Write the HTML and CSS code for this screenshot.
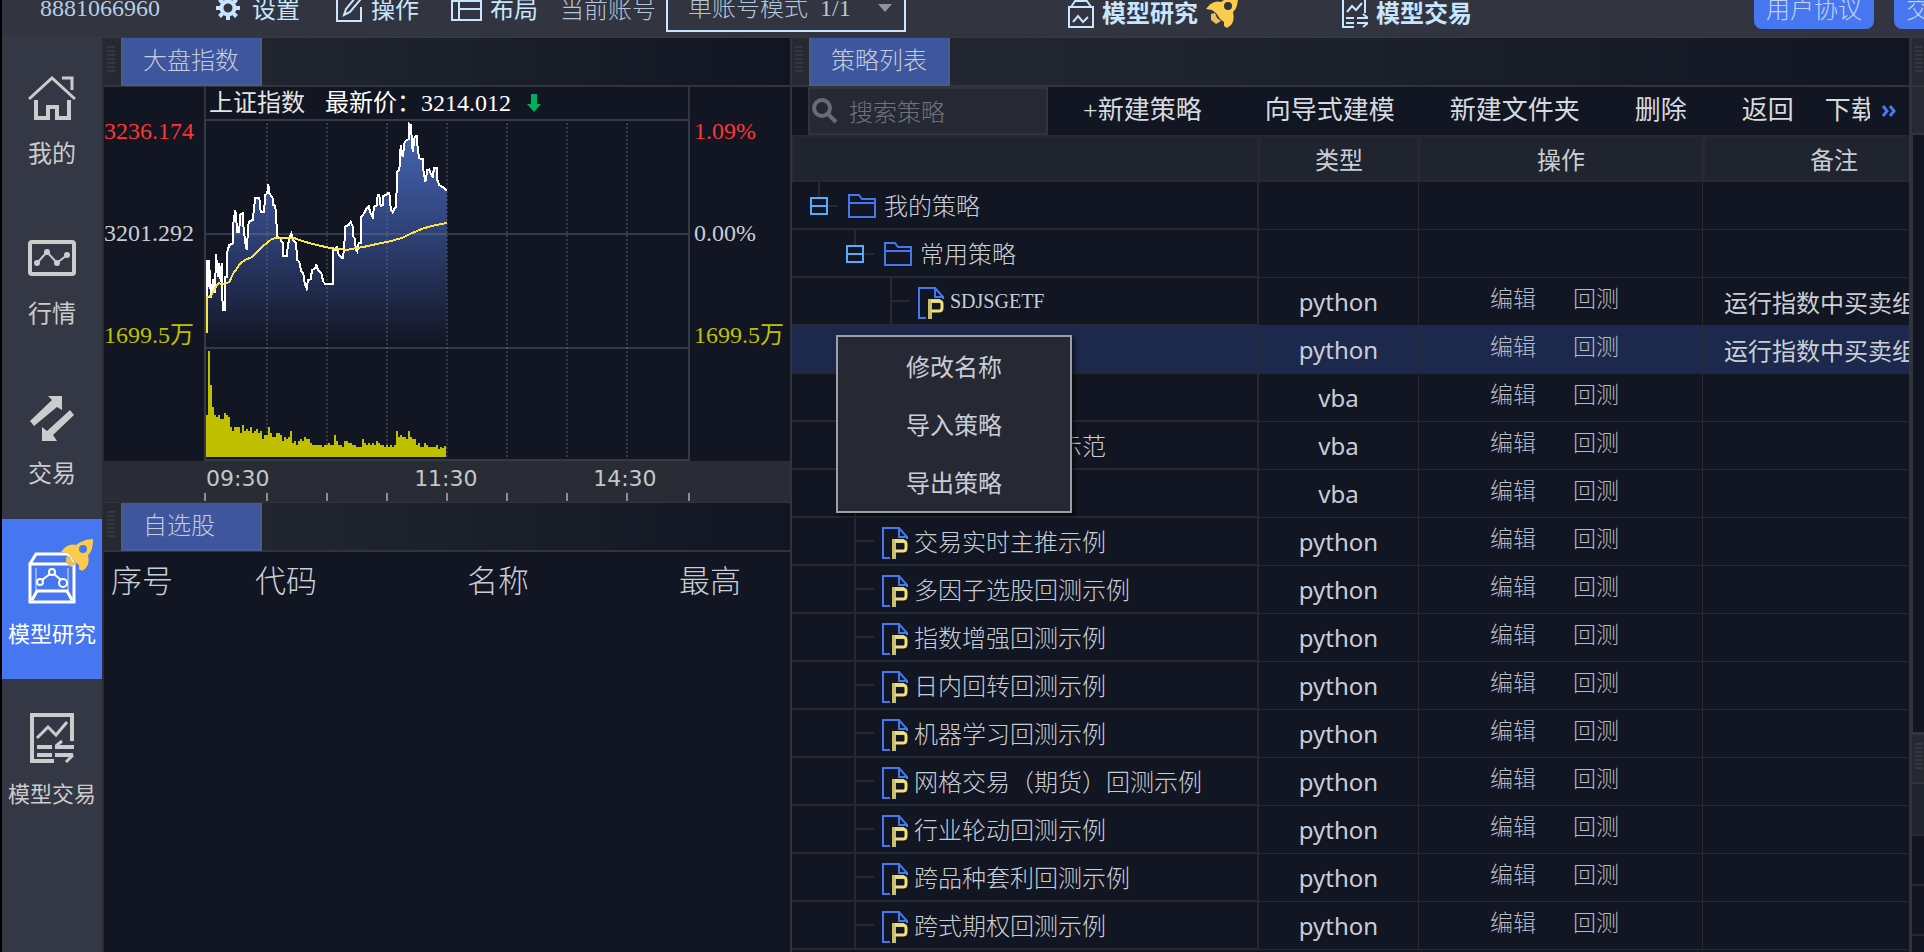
FILE: index.html
```html
<!DOCTYPE html>
<html lang="zh-CN">
<head>
<meta charset="utf-8">
<title>模型研究</title>
<link rel="stylesheet" href="styles.css">
</head>
<body>
<svg class="defs" aria-hidden="true">
  <symbol id="rocket" viewBox="0 0 32 32">
    <path fill="#fbcb4b" fill-rule="evenodd" d="M32 0C25 0 19 3 15 6 10 4 4 7 0 13l6 1 4 3 4 6 4 3 0 4 3 2 4-3c3-4 3-8 2-13C31 13 32 7 32 0ZM22 6a4 4 0 1 1 0 8 4 4 0 0 1 0-8Z"/>
    <path fill="#e9c060" d="M5 18l4-1 2 5 4 3-5 3-5-4Z"/>
  </symbol>
  <symbol id="folder" viewBox="0 0 28 24">
    <path fill="none" stroke="#4677f0" stroke-width="2" d="M1 23V1h10l3 4h13v18ZM1 9h26"/>
  </symbol>
  <symbol id="file" viewBox="0 0 26 32">
    <path fill="none" stroke="#4677f0" stroke-width="2" d="M8 31H1V1h16l8 9M17 1v9h8v2"/>
    <path fill="none" stroke="#cdc06c" stroke-width="4" d="M12 32V14h10"/>
    <path fill="none" stroke="#f0e277" stroke-width="3" d="M13 14h8q3 0 3 3v4q0 3-3 3h-8"/>
  </symbol>
  <symbol id="expander" viewBox="0 0 18 18">
    <path fill="none" stroke="#55adfb" stroke-width="2" d="M1 1h16v16H1ZM1 9h16"/>
  </symbol>
</svg>

<header class="topbar">
  <div class="topbar-inner">
    <span class="account-id">8881066960</span>
    <button class="top-btn settings" type="button">
      <svg width="24" height="24" viewBox="0 0 24 24" fill="none" stroke="currentColor"><circle cx="12" cy="12" r="6.500" stroke-width="4"/><path stroke-width="4" d="M12 0v4M12 20v4M0 12h4M20 12h4M3.500 3.500l3 3M17.500 17.500l3 3M20.500 3.500l-3 3M6.500 17.500l-3 3"/></svg>
      设置</button>
    <button class="top-btn edit" type="button">
      <svg width="26" height="28" viewBox="0 0 26 28" fill="none" stroke="currentColor" stroke-width="2"><path d="M15 4H1v23h24V13"/><path d="M8 21l2-6L20 3l4 3-10 12Z"/></svg>
      操作</button>
    <button class="top-btn layout" type="button">
      <svg width="31" height="26" viewBox="0 0 31 26" fill="none" stroke="currentColor" stroke-width="2"><path d="M1 1h29v24H1ZM8 1v24M8 14h22M1 6h29"/></svg>
      布局</button>
    <label class="mode-label" for="mode">当前账号</label>
    <div class="mode-box">
      <select id="mode"><option>单账号模式&nbsp; 1/1</option></select>
      <svg class="mode-arrow" width="14" height="8" viewBox="0 0 14 8"><path fill="#8f949c" d="M0 0h14L7 8Z"/></svg>
    </div>
    <a class="top-link research" href="#research">
      <svg width="26" height="32" viewBox="0 0 26 32" fill="none" stroke="currentColor" stroke-width="2"><path d="M1 11h24v20H1ZM3 11l4-6h12l4 6"/><path d="M5 26l5-6 5 6 5-5"/></svg>
      模型研究
      <svg class="top-rocket" width="32" height="32"><use href="#rocket"/></svg></a>
    <a class="top-link trading" href="#trading">
      <svg width="26" height="32" viewBox="0 0 26 32" fill="none" stroke="currentColor" stroke-width="2"><path d="M12 31H1V1h22v16"/><path d="M5 16l5-6 4 4 6-7M4 22h8M4 27h8M15 22h11l-5-4M15 27h11l-5 4"/></svg>
      模型交易</a>
    <button class="pill agreement" type="button">用户协议</button>
    <button class="pill" type="button">交易协议</button>
  </div>
</header>

<main class="workspace">
  <nav class="sidebar">
    <a href="#mine" class="nav-item">
      <span class="nav-icon"><svg width="48" height="44" viewBox="0 0 48 44" fill="none" stroke="currentColor" stroke-width="3"><path d="M1 23L24 2l23 21M34 2h10v12"/><path stroke-width="4" d="M8 24v18h12V31h9v11h12V24"/></svg></span>
      <span>我的</span></a>
    <a href="#quotes" class="nav-item">
      <span class="nav-icon"><svg width="48" height="36" viewBox="0 0 48 36" fill="none" stroke="currentColor"><rect x="2" y="2" width="44" height="32" rx="2" stroke-width="4"/><path stroke-width="2" d="M9 23L19 12l10 11 10-8"/><g fill="currentColor" stroke="none"><circle cx="9" cy="23" r="3"/><circle cx="19" cy="12" r="3"/><circle cx="29" cy="23" r="3"/><circle cx="39" cy="15" r="3"/></g></svg></span>
      <span>行情</span></a>
    <a href="#trade" class="nav-item">
      <span class="nav-icon"><svg width="44" height="48" viewBox="0 0 44 48" fill="currentColor"><path d="M18 2h14v14l-5-3L4 32 0 27 22 6Z"/><path d="M40 16l4 5-21 20 4 6H12V33l5 4Z"/></svg></span>
      <span>交易</span></a>
    <a href="#research" class="nav-item active">
      <span class="nav-icon"><svg width="48" height="52" viewBox="0 0 48 52" fill="none" stroke="currentColor" stroke-width="2"><path stroke-width="3" d="M2 12h44v38H2ZM2 12l6-10h32l6 10M4 48l5-9h30l5 9"/><path stroke-opacity=".4" d="M8 16v23M40 16v23"/><circle cx="12" cy="30" r="3"/><circle cx="24" cy="20" r="3"/><circle cx="35" cy="31" r="4"/><path d="M14 28l8-6M26 22l7 6"/></svg></span>
      <svg class="nav-rocket" width="32" height="32"><use href="#rocket"/></svg>
      <span class="nav-long">模型研究</span></a>
    <a href="#trading" class="nav-item">
      <span class="nav-icon"><svg width="44" height="50" viewBox="0 0 44 50" fill="none" stroke="currentColor" stroke-width="4"><path d="M24 48H2V2h40v26"/><path stroke-width="3" d="M7 25l11-11 8 8L37 9"/><path d="M7 34h15M25 34h19M7 42h15M25 42h18"/><path stroke-width="3" d="M26 33l6-5M43 42l-7 7"/></svg></span>
      <span class="nav-long">模型交易</span></a>
  </nav>

  <div class="left">
    <section class="panel">
      <div class="panel-head"><i class="grip"></i><h2 class="tab">大盘指数</h2></div>
      <div class="chart">
        <div class="axis axis-left"><span class="up">3236.174</span><span>3201.292</span><span class="vol">1699.5万</span></div>
        <div class="plot">
          <div class="quote"><span class="quote-name">上证指数</span><span>最新价：3214.012</span>
            <svg width="14" height="18" viewBox="0 0 14 18"><path fill="#00ae5f" d="M4 0h6v10h4L7 18 0 10h4Z"/></svg></div>
          <svg class="plot-svg" viewBox="0 0 486 342" preserveAspectRatio="none">
            <defs><linearGradient id="area" x1="0" y1="0" x2="0" y2="1"><stop offset="0" stop-color="#4868b8"/><stop offset=".5" stop-color="#2e4075"/><stop offset="1" stop-color="#121522"/></linearGradient></defs>
            <path id="priceArea" fill="url(#area)"/>
            <g stroke="#787d8c" stroke-opacity=".36" stroke-width="2" shape-rendering="crispEdges">
              <path fill="none" d="M1 1h484v340H1ZM1 115h484M1 229h484"/>
              <path fill="none" stroke-dasharray="2 2" d="M63 4v334M123 4v334M183 4v334M243 4v334M303 4v334M363 4v334M423 4v334"/>
            </g>
            <path id="volume" fill="#c0c000" shape-rendering="crispEdges"/>
            <polyline id="price" fill="none" stroke="#fff" stroke-width="2" shape-rendering="crispEdges"/>
            <polyline id="average" fill="none" stroke="#f9e547" stroke-width="2" shape-rendering="crispEdges"/>
          </svg>
        </div>
        <div class="axis"><span class="up">1.09%</span><span>0.00%</span><span class="vol">1699.5万</span></div>
      </div>
      <div class="times">
        <div class="time-labels"><span>09:30</span><span>11:30</span><span>14:30</span></div>
        <svg class="ticks" viewBox="0 0 486 8" preserveAspectRatio="none"><path stroke="#8b8d92" stroke-width="2" d="M1 0v8M63 0v8M123 0v8M183 0v8M243 0v8M303 0v8M363 0v8M423 0v8M485 0v8"/></svg>
      </div>
    </section>
    <section class="panel watch">
      <div class="panel-head"><i class="grip"></i><h2 class="tab">自选股</h2></div>
      <div class="clip"><table class="watch-table"><thead><tr><th>序号</th><th>代码</th><th>名称</th><th>最高</th></tr></thead></table></div>
    </section>
  </div>

  <section class="panel right">
    <div class="panel-head"><i class="grip"></i><h2 class="tab">策略列表</h2></div>
    <div class="toolbar">
      <label class="search"><svg width="26" height="26" viewBox="0 0 26 26" fill="none" stroke="#6a6c71" stroke-width="4"><circle cx="10" cy="10" r="8"/><path d="M16 16l8 8"/></svg><input type="search" placeholder="搜索策略" aria-label="搜索策略"></label>
      <div class="tools">
        <button type="button" class="tool-new">+新建策略</button><button type="button">向导式建模</button><button type="button">新建文件夹</button><button type="button">删除</button><button type="button">返回</button><button type="button" class="tool-last">下载</button>
      </div>
      <button type="button" class="more" aria-label="更多"><svg width="14" height="12" viewBox="0 0 14 12" fill="none" stroke="#4677f0" stroke-width="3"><path d="M1 1l4 5-4 5M8 1l4 5-4 5"/></svg></button>
    </div>
    <div class="clip grow">
      <table class="strategies">
        <colgroup><col><col class="c-type"><col class="c-ops"><col class="c-note"></colgroup>
        <thead><tr><th aria-label="名称"></th><th>类型</th><th>操作</th><th>备注</th></tr></thead>
        <tbody id="rows"></tbody>
      </table>
    </div>
    <div class="menu" role="menu">
      <button type="button" role="menuitem">修改名称</button>
      <button type="button" role="menuitem">导入策略</button>
      <button type="button" role="menuitem">导出策略</button>
    </div>
  </section>

  <aside class="edge">
    <div class="edge-top"><i class="grip"></i></div>
    <div class="edge-tool"></div>
    <div class="edge-body"></div>
    <div class="edge-top edge-second"><i class="grip"></i></div>
    <div class="edge-th"></div>
    <div class="edge-td"></div><div class="edge-td"></div><div class="edge-td"></div>
  </aside>
</main>
<script src="app.js"></script>
</body>
</html>
```

FILE: styles.css
```css
:root {
  --bg: #121522;
  --line: #262932;
  --edge: #32343b;
  --head: #262932;
  --text: #c9ced6;
  --blue: #4677f0;
  --cjk: "Noto Sans CJK SC", sans-serif;
  --song: "Liberation Serif", "Noto Sans CJK SC", serif;
}
* { box-sizing: border-box; }
body {
  margin: 0;
  height: 100vh;
  display: flex;
  flex-direction: column;
  overflow: hidden;
  background: var(--bg);
  color: var(--text);
  font: 24px/32px var(--cjk);
  border-left: 2px solid #000;
}
button, input, select {
  font: inherit;
  color: inherit;
  background: none;
  border: 0;
  padding: 0;
  margin: 0;
  white-space: nowrap;
}
a { color: inherit; text-decoration: none; }
svg { display: block; flex: none; }
.defs { position: absolute; width: 0; height: 0; }

.topbar {
  flex: none;
  height: 38px;
  display: flex;
  align-items: flex-end;
  overflow: hidden;
  background: #32343f;
  border-bottom: 1px solid #3a3b40;
}
.topbar-inner {
  flex: none;
  height: 58px;
  display: flex;
  align-items: center;
  color: #c8e6ff;
  white-space: nowrap;
}
.account-id { font-family: var(--song); color: #b8cfe4; margin-left: 38px; }
.top-btn { display: flex; align-items: center; }
.settings { gap: 12px; margin-left: 56px; }
.edit { gap: 9px; margin-left: 36px; }
.layout { gap: 8px; margin-left: 32px; }
.mode-label { margin-left: 22px; color: #b5c6d6; font-weight: 300; }
.mode-box {
  display: flex;
  align-items: center;
  width: 240px;
  height: 48px;
  margin-left: 10px;
  border: 2px solid #c8e6ff;
  padding: 0 12px 0 20px;
}
.mode-box select {
  flex: 1;
  min-width: 0;
  appearance: none;
  font-family: var(--song);
  color: #b5c6d6;
  font-weight: 300;
}
.top-link { display: flex; align-items: center; gap: 8px; padding-top: 8px; font-weight: 700; }
.research { margin-left: 162px; }
.trading { margin-left: 104px; }
.pill {
  width: 120px;
  height: 42px;
  border-radius: 8px;
  background: var(--blue);
  color: #c5d2ee;
  font-weight: 300;
}
.agreement { margin-left: 282px; margin-right: 20px; }

.workspace {
  flex: 1;
  min-height: 0;
  display: grid;
  grid-template-columns: 102px minmax(0, 687fr) minmax(0, 1118fr) 15px;
}

.sidebar { padding-top: 1px; background: #343744; border-right: 2px solid #282b34; }
.nav-item {
  position: relative;
  display: flex;
  flex-direction: column;
  align-items: center;
  height: 160px;
  padding-top: 27px;
  color: #ccc;
}
.nav-icon { display: flex; align-items: center; height: 64px; margin-bottom: 6px; }
.nav-long { font-size: 22px; }
.nav-item.active { background: var(--blue); color: #fff; }
.nav-rocket { position: absolute; top: 20px; right: 9px; }

.left { display: flex; flex-direction: column; min-width: 0; min-height: 0; border-right: 1px solid var(--edge); }
.panel { position: relative; display: flex; flex-direction: column; min-width: 0; min-height: 0; }
.panel-head {
  flex: none;
  display: flex;
  height: 49px;
  border-bottom: 2px solid var(--edge);
  background: linear-gradient(90deg, #262932, #1b212b 50%, #121522);
}
.grip {
  flex: none;
  align-self: flex-start;
  width: 8px;
  height: 26px;
  margin: 8px 6px 0 3px;
  background: repeating-linear-gradient(#373940 0 2px, transparent 2px 4px);
}
.tab {
  width: 141px;
  height: 48px;
  margin: 0;
  padding-left: 20px;
  border: solid #4a5c8c;
  border-width: 0 2px 2px;
  background: #3d569e;
  font: 300 24px/42px var(--cjk);
  color: #c5ccdc;
}

.chart { display: grid; grid-template-columns: 100px 1fr 100px; }
.axis {
  font-family: var(--song);
  display: flex;
  flex-direction: column;
  padding-top: 28px;
  gap: 70px;
  padding-left: 4px;
}
.axis-left { padding-left: 0; }
.up { color: #ff3535; }
.vol { color: #c0c000; }
.plot { min-width: 0; }
.quote {
  display: flex;
  align-items: center;
  gap: 16px;
  height: 32px;
  border: solid var(--edge);
  border-width: 0 2px;
  padding-left: 3px;
  font-family: var(--song);
  color: #fff;
  white-space: nowrap;
}
.quote-name { margin-right: 4px; color: #e4e4e4; }
.plot-svg { width: 100%; height: 342px; }
.times {
  height: 42px;
  padding: 0 100px;
  background: #292c35;
  border-bottom: 1px solid var(--edge);
}
.time-labels {
  display: flex;
  height: 32px;
  padding-left: 2px;
  font: 22px/36px "DejaVu Sans", sans-serif;
  color: #c4c8c8;
}
.time-labels span { width: 30%; }
.time-labels span:first-child { flex: 1; }
.time-labels span:nth-child(2) { width: 37%; }
.time-labels span:last-child { width: 20%; }
.ticks { width: 100%; height: 8px; }

.watch { flex: 1; }
.clip { overflow: hidden; }
.watch-table {
  width: calc(100% + 26px);
  table-layout: fixed;
  border-collapse: collapse;
  font-size: 31px;
  line-height: 54px;
}
.watch-table th { font-weight: 300; padding: 0; }
.watch-table th:first-child { width: 76px; }

.right { border-left: 1px solid var(--edge); }
.toolbar { flex: none; display: flex; align-items: center; height: 48px; padding-left: 16px; }
.search {
  display: flex;
  align-items: center;
  gap: 11px;
  width: 240px;
  height: 48px;
  padding-left: 2px;
  border: 2px solid #32343a;
  background: #262933;
  font-weight: 300;
}
.search input { flex: 1; min-width: 0; outline: 0; }
.search input::placeholder { color: #6f737a; opacity: 1; }
.tools {
  flex: 1;
  min-width: 0;
  display: flex;
  gap: 55px;
  overflow: hidden;
  padding-left: 35px;
  font: 26px/40px var(--song);
  color: #d5dade;
}
.tool-new { margin-right: 8px; }
.tool-last { margin-left: -24px; }
.more { width: 39px; padding-left: 12px; }
.grow { flex: 1; }
.strategies {
  width: calc(100% + 56px);
  table-layout: fixed;
  border-collapse: separate;
  border-spacing: 0;
}
.c-type { width: 160px; }
.c-ops { width: 284px; }
.c-note { width: 262px; }
.strategies th {
  height: 47px;
  padding: 0;
  background: #20242e;
  border: 2px solid var(--line);
  font-weight: 400;
}
.strategies td {
  height: 48px;
  padding: 0;
  border: solid var(--line);
  border-width: 0 1px 1px 0;
  overflow: hidden;
  white-space: nowrap;
}
.strategies td:first-child { border-width: 0 2px 2px 0; }
.strategies .selected td { background: #1d294c; }
.type { text-align: center; font-family: "Noto Sans", sans-serif; }
.ops { display: flex; justify-content: center; gap: 37px; padding: 0 12px 10px 0; }
.ops button { font-size: 23px; line-height: 32px; font-weight: 300; color: #b5bac3; }
.strategies .note { padding-left: 21px; }

.node { display: flex; align-items: center; height: 46px; white-space: pre; font-weight: 300; }
.node .folder { margin: 2px 8px 0 10px; }
.node .file { margin: 4px 6px 0 8px; }
.latin { font: 20px/32px "Liberation Serif", serif; }
.toggle {
  display: flex;
  align-items: center;
  align-self: stretch;
  width: 28px;
  padding-top: 2px;
  background:
    linear-gradient(var(--line), var(--line)) 8px 0 / 2px 16px no-repeat,
    linear-gradient(var(--line), var(--line)) 18px 23px / 10px 2px no-repeat;
}
.branch {
  align-self: stretch;
  width: 20px;
  border-left: 2px solid var(--line);
  background: linear-gradient(var(--line), var(--line)) left center / 18px 2px no-repeat;
}
.level-1 { padding-left: 18px; }
.level-2 { padding-left: 54px; }
.level-2.leaf { padding-left: 62px; }
.level-3.leaf { padding-left: 98px; }

.menu {
  position: absolute;
  left: 44px;
  top: 297px;
  width: 236px;
  display: flex;
  flex-direction: column;
  border: 2px solid #9aa0a6;
  background: #262933;
  box-shadow: 3px 3px 4px #0008;
}
.menu button { height: 58px; }

.edge { border-left: 3px solid var(--edge); min-width: 0; display: flex; flex-direction: column; overflow: hidden; }
.edge-top { flex: none; height: 49px; background: var(--head); border-bottom: 2px solid var(--edge); display: flex; }
.edge-tool { flex: none; height: 48px; background: var(--head); border-bottom: 2px solid var(--edge); }
.edge-body { flex: 1; border: solid var(--edge); border-width: 0 0 3px 1px; }
.edge-th { flex: none; height: 52px; background: #20242e; border-bottom: 2px solid var(--line); }
.edge-td { flex: none; height: 50px; border-bottom: 2px solid var(--line); }
.edge-td:last-child { height: 16px; border: 0; }
```

FILE: app.js
```js
const strategies = [
  { name: "我的策略", level: 1, folder: true },
  { name: "常用策略", level: 2, folder: true },
  { name: "SDJSGETF", level: 3, type: "python", note: "运行指数中买卖组合", latin: true },
  { name: "", level: 3, type: "python", note: "运行指数中买卖组合", selected: true },
  { name: "", level: 2, type: "vba" },
  { name: "　　　　　　示范", level: 2, type: "vba" },
  { name: "", level: 2, type: "vba" },
  { name: "交易实时主推示例", level: 2, type: "python" },
  { name: "多因子选股回测示例", level: 2, type: "python" },
  { name: "指数增强回测示例", level: 2, type: "python" },
  { name: "日内回转回测示例", level: 2, type: "python" },
  { name: "机器学习回测示例", level: 2, type: "python" },
  { name: "网格交易（期货）回测示例", level: 2, type: "python" },
  { name: "行业轮动回测示例", level: 2, type: "python" },
  { name: "跨品种套利回测示例", level: 2, type: "python" },
  { name: "跨式期权回测示例", level: 2, type: "python" }
];

const icon = (id, w, h) => `<svg class="${id}" width="${w}" height="${h}"><use href="#${id}"/></svg>`;

document.getElementById("rows").innerHTML = strategies.map(s => {
  const lead = s.folder
    ? `<span class="toggle">${icon("expander", 18, 18)}</span>` + icon("folder", 28, 24)
    : `<i class="branch"></i>` + icon("file", 26, 32);
  const ops = s.folder ? "" : `<div class="ops"><button type="button">编辑</button><button type="button">回测</button></div>`;
  return `<tr class="${s.selected ? "selected" : ""}">
    <td><div class="node level-${s.level} ${s.folder ? "" : "leaf"}">${lead}<span class="${s.latin ? "latin" : ""}">${s.name}</span></div></td>
    <td class="type">${s.type || ""}</td><td>${ops}</td><td class="note">${s.note || ""}</td></tr>`;
}).join("");

/* Series are sampled on a grid three times finer than the plot. */
const toPlot = pairs => pairs.trim().split(/\s+/).map(p => {
  const [x, y] = p.split(",").map(Number);
  return [(x / 3 - 14).toFixed(1), (y / 3 - 39).toFixed(1)];
});
const price = toPlot(`51,540 51,650 57,540 63,655 69,598 75,640 78,522 84,590 88,550 92,605 95,550 98,690 104,690 106,590
 112,590 112,515 118,495 128,490 130,430 136,390 142,455 148,455 150,405 158,400 160,435 166,490 170,510 176,425 188,420
 192,385 196,355 208,353 212,395 222,395 226,345 232,340 235,312 238,340 248,355 250,375 256,378 260,440 262,470 272,475
 275,487 280,490 280,527 290,527 295,490 300,470 304,462 310,480 318,490 322,540 328,545 334,575 340,580 344,610 350,625
 354,600 362,598 366,570 376,565 378,552 384,570 394,580 400,605 406,612 430,612 430,510 438,510 440,498 444,520 452,530
 458,535 462,510 466,440 476,435 482,425 488,440 488,468 494,475 498,510 502,515 506,490 514,488 514,410 522,400 530,385
 536,378 540,395 548,412 552,380 560,376 563,345 568,345 572,378 578,375 580,348 588,345 596,338 600,350 602,390 608,397
 614,385 618,380 622,275 628,270 630,240 632,195 638,232 644,185 650,180 656,178 658,132 662,135 664,155 668,215 674,170
 680,168 684,215 688,235 698,238 700,268 706,305 712,270 718,268 722,280 728,290 732,265 740,265 742,300 748,315 756,320
 764,325 770,333`);
const average = toPlot(`51,758 51,652 63,648 75,625 85,610 100,612 118,606 130,580 150,552 165,540 185,532 215,502 245,477
 265,473 312,474 335,482 360,490 385,496 420,504 470,510 500,504 530,499 560,492 600,484 635,474 665,460 700,445 735,436 770,429`);
document.getElementById("price").setAttribute("points", price.join(" "));
document.getElementById("average").setAttribute("points", average.join(" "));
document.getElementById("priceArea").setAttribute("d", `M3 228L${price.join("L")}V228Z`);

const volumes = [42,106,72,50,42,40,42,38,38,44,42,40,30,26,30,30,30,24,32,26,28,26,30,24,26,28,24,26,18,22,22,30,24,20,20,
  24,24,22,16,20,18,20,26,14,16,12,16,18,16,20,18,18,14,12,12,12,12,12,10,12,12,14,12,12,22,16,12,12,10,16,16,14,14,12,12,
  10,10,10,18,14,12,14,12,14,12,16,14,12,12,10,12,10,12,10,12,26,20,22,20,20,18,26,20,18,18,12,14,10,10,14,12,10,10,10,10,
  12,8,10,9,11];
document.getElementById("volume").setAttribute("d",
  volumes.map((v, i) => `M${2 + i * 2} 338v${-v}h2v${v}Z`).join(""));
```
